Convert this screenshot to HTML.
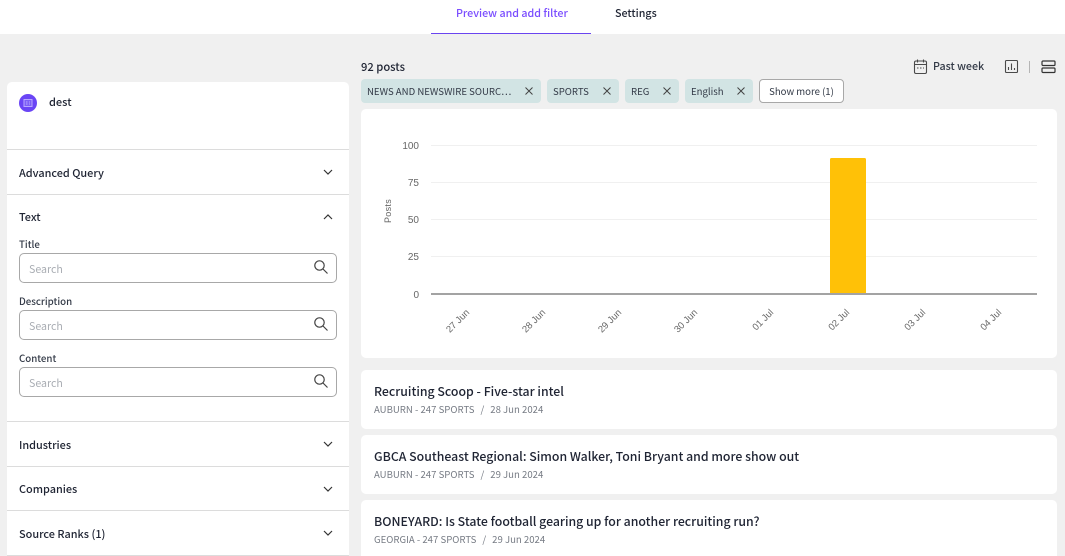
<!DOCTYPE html>
<html><head><meta charset="utf-8"><style>
html,body{margin:0;padding:0;overflow:hidden;width:1065px;height:556px}
#p{width:1065px;height:556px;overflow:hidden;position:relative;background:#f0f0f0;font-family:"Noto Sans CJK SC","Liberation Sans",sans-serif;color:#1f2433}
.a{position:absolute;white-space:nowrap}
.w{position:absolute;background:#fff}
.line{position:absolute;left:7px;width:342px;height:1px;background:#dcdcdc}
.h{position:absolute;left:19px;font-size:10.9px;font-weight:500;line-height:16px;white-space:nowrap}
.l{position:absolute;left:19px;font-size:9.7px;font-weight:500;line-height:14px;color:#333a47}
.in{position:absolute;left:19px;width:316px;height:28px;border:1px solid #a8a8a8;border-radius:5px;background:#fff}
.in span{position:absolute;left:9px;top:8px;font-size:10.6px;line-height:16px;color:#a9adb3}
.in svg{position:absolute;left:293px;top:5px}
.chev{position:absolute;left:322px}
.chip{position:absolute;top:79px;height:24px;background:#d2e4e4;border-radius:4px;font-size:9.6px;line-height:24px;color:#333a47}
.chip span{position:absolute;left:6px;top:0;white-space:nowrap}
.chip svg{position:absolute;top:6px}
.card{position:absolute;left:361px;width:696px;background:#fff;border-radius:5px;overflow:hidden}
.t{position:absolute;left:13px;top:12px;font-size:12.3px;font-weight:500;line-height:19px;white-space:nowrap;color:#1f2433}
.m{position:absolute;left:13px;top:32px;font-size:9.6px;line-height:15px;color:#777c85;white-space:nowrap}
.m i{font-style:normal;margin:0 6px}
</style></head><body><div id="p">
<div class="w" style="left:0;top:0;width:1065px;height:34px"></div>
<div class="a" style="left:456px;top:6px;font-size:10.7px;font-weight:500;line-height:16px;color:#7a4dff">Preview and add filter</div>
<div class="a" style="left:615px;top:6px;font-size:10.7px;font-weight:500;line-height:16px;color:#1f2433">Settings</div>
<div class="a" style="left:431px;top:33px;width:160px;height:1px;background:#6a45f0"></div>

<div class="w" style="left:7px;top:82px;width:342px;height:474px;border-radius:5px 5px 0 0"></div>
<div class="a" style="left:19px;top:94px;width:18px;height:18px;border-radius:50%;background:#6a45f5"></div>
<svg class="a" style="left:23px;top:98px" width="10" height="10" viewBox="0 0 10 10" fill="#7d60f6" stroke="#b9a8ff" stroke-width="1"><rect x="1" y="1.5" width="8" height="7"/><path d="M3 4h1.500M3 6h1.500M6 4h1M6 6h1"/></svg>
<div class="a" style="left:49px;top:94px;font-size:11px;font-weight:500;line-height:17px">dest</div>

<div class="line" style="top:149px"></div>
<div class="h" style="top:165px">Advanced Query</div>
<svg class="chev" style="top:167px" width="12" height="10" viewBox="0 0 12 10" fill="none" stroke="#333" stroke-width="1.200"><path d="M2 3l4 4 4-4"/></svg>
<div class="line" style="top:194px"></div>
<div class="h" style="top:209px">Text</div>
<svg class="chev" style="top:212px" width="12" height="10" viewBox="0 0 12 10" fill="none" stroke="#333" stroke-width="1.200"><path d="M2 7l4-4 4 4"/></svg>

<div class="l" style="top:237px">Title</div>
<div class="in" style="top:253px"><span>Search</span><svg width="16" height="16" viewBox="0 0 16 16" fill="none" stroke="#444" stroke-width="1.200"><circle cx="6.500" cy="6.500" r="4.700"/><path d="M10 10l4.500 4.500"/></svg></div>
<div class="l" style="top:294px">Description</div>
<div class="in" style="top:310px"><span>Search</span><svg width="16" height="16" viewBox="0 0 16 16" fill="none" stroke="#444" stroke-width="1.200"><circle cx="6.500" cy="6.500" r="4.700"/><path d="M10 10l4.500 4.500"/></svg></div>
<div class="l" style="top:351px">Content</div>
<div class="in" style="top:367px"><span>Search</span><svg width="16" height="16" viewBox="0 0 16 16" fill="none" stroke="#444" stroke-width="1.200"><circle cx="6.500" cy="6.500" r="4.700"/><path d="M10 10l4.500 4.500"/></svg></div>

<div class="line" style="top:421px"></div>
<div class="h" style="top:437px">Industries</div>
<svg class="chev" style="top:439px" width="12" height="10" viewBox="0 0 12 10" fill="none" stroke="#333" stroke-width="1.200"><path d="M2 3l4 4 4-4"/></svg>
<div class="line" style="top:466px"></div>
<div class="h" style="top:481px">Companies</div>
<svg class="chev" style="top:484px" width="12" height="10" viewBox="0 0 12 10" fill="none" stroke="#333" stroke-width="1.200"><path d="M2 3l4 4 4-4"/></svg>
<div class="line" style="top:510px"></div>
<div class="h" style="top:526px">Source Ranks (1)</div>
<svg class="chev" style="top:528px" width="12" height="10" viewBox="0 0 12 10" fill="none" stroke="#333" stroke-width="1.200"><path d="M2 3l4 4 4-4"/></svg>
<div class="line" style="top:555px"></div>

<div class="a" style="left:361px;top:59px;font-size:11.2px;font-weight:500;line-height:16px">92 posts</div>
<div class="chip" style="left:361px;width:180px"><span>NEWS AND NEWSWIRE SOURC…</span><svg style="left:162px" width="12" height="12" viewBox="0 0 12 12" stroke="#444" stroke-width="1"><path d="M2.500 2.500l7 7M9.500 2.500l-7 7"/></svg></div>
<div class="chip" style="left:547px;width:72px"><span>SPORTS</span><svg style="left:54px" width="12" height="12" viewBox="0 0 12 12" stroke="#444" stroke-width="1"><path d="M2.500 2.500l7 7M9.500 2.500l-7 7"/></svg></div>
<div class="chip" style="left:625px;width:54px"><span>REG</span><svg style="left:36px" width="12" height="12" viewBox="0 0 12 12" stroke="#444" stroke-width="1"><path d="M2.500 2.500l7 7M9.500 2.500l-7 7"/></svg></div>
<div class="chip" style="left:685px;width:68px"><span>English</span><svg style="left:50px" width="12" height="12" viewBox="0 0 12 12" stroke="#444" stroke-width="1"><path d="M2.500 2.500l7 7M9.500 2.500l-7 7"/></svg></div>
<div class="a" style="left:759px;top:79px;width:83px;height:22px;border:1px solid #a8a8a8;border-radius:4px;background:#fff;font-size:9.6px;line-height:23px;text-align:center;color:#333a47">Show more (1)</div>

<svg class="a" style="left:912px;top:58px" width="17" height="18" viewBox="0 0 17 18" fill="none" stroke="#4a4a4a" stroke-width="1.100"><rect x="2.500" y="3" width="12" height="12.500" rx="1.500"/><path d="M2.500 6.500h12M5.500 1.500v3M11.500 1.500v3"/><path d="M5 10h1.500M8 10h1.500M11 10h1" stroke-width="1"/></svg>
<div class="a" style="left:933px;top:59px;font-size:10.7px;font-weight:500;line-height:16px;color:#333a47">Past week</div>
<svg class="a" style="left:1004px;top:59px" width="15" height="15" viewBox="0 0 15 15" fill="none" stroke="#4a4a4a" stroke-width="1.100"><rect x="1.500" y="1.500" width="12" height="12" rx="1"/><path d="M4.500 11V8M7.500 11V4.500M10.500 11V9"/></svg>
<div class="a" style="left:1029px;top:61px;width:1px;height:12px;background:#b5b5b5"></div>
<svg class="a" style="left:1041px;top:60px" width="15" height="14" viewBox="0 0 15 14" fill="none" stroke="#333" stroke-width="1.200"><rect x="1" y="1" width="13" height="4.500" rx="1"/><rect x="1" y="8" width="13" height="4.500" rx="1"/></svg>

<div class="card" style="top:109px;height:249px"></div>
<svg class="a" style="left:361px;top:109px" width="696" height="249" viewBox="361 109 696 249" font-family="'Liberation Sans',sans-serif" font-size="10" fill="#666">
<g stroke="#f0f0f0" stroke-width="1"><path d="M431 145.500H1037M431 182.500H1037M431 219.500H1037M431 256.500H1037"/></g>
<rect x="830" y="158" width="36" height="136" rx="1.500" fill="#ffc107"/>
<rect x="431" y="293" width="606" height="2" fill="#a3a3a3"/>
<g text-anchor="end"><text x="419" y="149">100</text><text x="419" y="186">75</text><text x="419" y="223">50</text><text x="419" y="260">25</text><text x="419" y="298">0</text></g>
<text transform="translate(391,223) rotate(-90)" font-size="9" letter-spacing=".3">Posts</text>
<g text-anchor="end" font-size="9.500">
<text transform="translate(470,313) rotate(-45)">27 Jun</text>
<text transform="translate(546,313) rotate(-45)">28 Jun</text>
<text transform="translate(622,313) rotate(-45)">29 Jun</text>
<text transform="translate(698,313) rotate(-45)">30 Jun</text>
<text transform="translate(774,313) rotate(-45)">01 Jul</text>
<text transform="translate(850,313) rotate(-45)">02 Jul</text>
<text transform="translate(926,313) rotate(-45)">03 Jul</text>
<text transform="translate(1002,313) rotate(-45)">04 Jul</text>
</g>
</svg>

<div class="card" style="top:370px;height:59px"><div class="t">Recruiting Scoop - Five-star intel</div><div class="m">AUBURN - 247 SPORTS<i>/</i>28 Jun 2024</div></div>
<div class="card" style="top:435px;height:59px"><div class="t">GBCA Southeast Regional: Simon Walker, Toni Bryant and more show out</div><div class="m">AUBURN - 247 SPORTS<i>/</i>29 Jun 2024</div></div>
<div class="card" style="top:500px;height:56px;border-radius:5px 5px 0 0"><div class="t">BONEYARD: Is State football gearing up for another recruiting run?</div><div class="m">GEORGIA - 247 SPORTS<i>/</i>29 Jun 2024</div></div>
</div></body></html>
